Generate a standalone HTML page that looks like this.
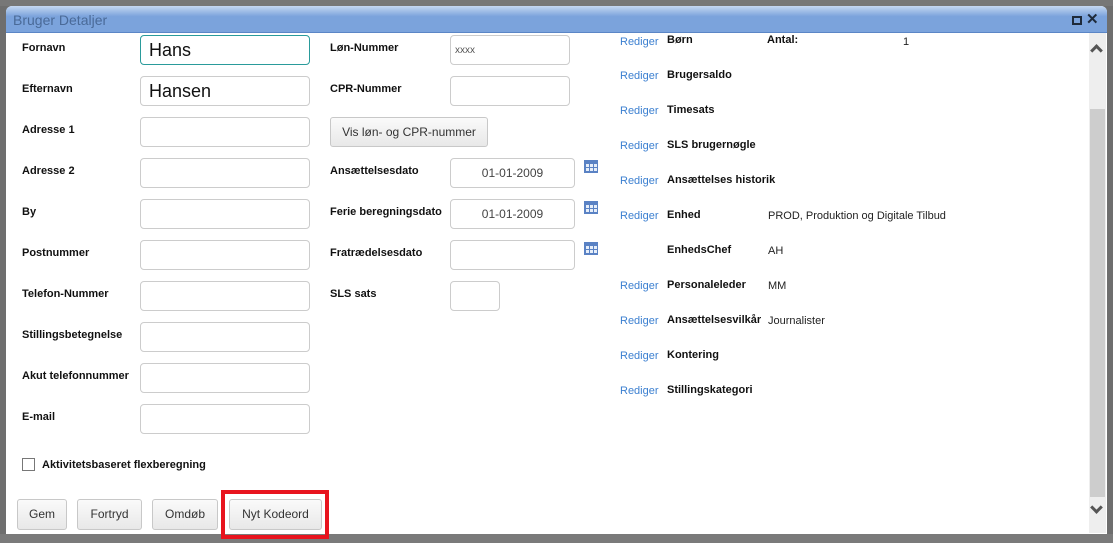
<!DOCTYPE html>
<html><head><meta charset="utf-8"><style>
*{box-sizing:border-box;margin:0;padding:0}
body{width:1113px;height:543px;background:#6e6e6e;font-family:"Liberation Sans",sans-serif;position:relative;overflow:hidden}
.a{position:absolute}
.dlg{left:6px;top:6px;width:1101px;height:528px;background:#fff;border-radius:6px 6px 0 0;overflow:hidden}
.tb{left:0;top:0;width:1101px;height:27px;background:linear-gradient(#c5d8f2,#7ba3dc 40%);border-bottom:1px solid #5b86c6;color:#4a6a98;font-size:14px;padding:6px 0 0 7px}
.l{font-size:11px;font-weight:bold;color:#111}
.i{border:1px solid #ccc;border-radius:4px;height:30px;background:#fff}
.r{font-size:11px;color:#3b7fd0}
.v{font-size:11px;color:#222}
.b{border:1px solid #c8c8c8;border-radius:3px;background:linear-gradient(#fafafa,#e8e8e8);font-size:12px;color:#333;text-align:center;line-height:29px;height:31px}
.cal{width:14px;height:13px;border:1px solid #5a82c4;background:repeating-linear-gradient(90deg,#5a82c4 0 1px,transparent 1px 4px),repeating-linear-gradient(#5a82c4 0 1px,#e6eef9 1px 4px);border-top:3px solid #5a82c4}
.d{font-size:12px;color:#444;text-align:center;line-height:28px}
</style></head><body>
<div class="a" style="left:0;top:0;width:1113px;height:6px;background:#777"></div>
<div class="a dlg">
<div class="a tb">Bruger Detaljer</div>
<div class="a" style="left:1066px;top:10px;width:10px;height:9px;border:2px solid #1e2a3a"></div>
<div class="a" style="left:1080px;top:4px;font-size:15px;font-weight:bold;color:#1e2a3a">✕</div>
</div>
<!-- left column -->
<div class="a l" style="left:22px;top:42px">Fornavn</div>
<div class="a l" style="left:22px;top:83px">Efternavn</div>
<div class="a l" style="left:22px;top:124px">Adresse 1</div>
<div class="a l" style="left:22px;top:165px">Adresse 2</div>
<div class="a l" style="left:22px;top:206px">By</div>
<div class="a l" style="left:22px;top:247px">Postnummer</div>
<div class="a l" style="left:22px;top:288px">Telefon-Nummer</div>
<div class="a l" style="left:22px;top:329px">Stillingsbetegnelse</div>
<div class="a l" style="left:22px;top:370px">Akut telefonnummer</div>
<div class="a l" style="left:22px;top:411px">E-mail</div>
<div class="a i" style="left:140px;top:35px;width:170px;border-color:#2a9b9b;font-size:18px;padding:4px 8px;color:#111">Hans</div>
<div class="a i" style="left:140px;top:76px;width:170px;font-size:18px;padding:4px 8px;color:#111">Hansen</div>
<div class="a i" style="left:140px;top:117px;width:170px"></div>
<div class="a i" style="left:140px;top:158px;width:170px"></div>
<div class="a i" style="left:140px;top:199px;width:170px"></div>
<div class="a i" style="left:140px;top:240px;width:170px"></div>
<div class="a i" style="left:140px;top:281px;width:170px"></div>
<div class="a i" style="left:140px;top:322px;width:170px"></div>
<div class="a i" style="left:140px;top:363px;width:170px"></div>
<div class="a i" style="left:140px;top:404px;width:170px"></div>
<!-- middle -->
<div class="a l" style="left:330px;top:42px">Løn-Nummer</div>
<div class="a l" style="left:330px;top:83px">CPR-Nummer</div>
<div class="a l" style="left:330px;top:165px">Ansættelsesdato</div>
<div class="a l" style="left:330px;top:206px">Ferie beregningsdato</div>
<div class="a l" style="left:330px;top:247px">Fratrædelsesdato</div>
<div class="a l" style="left:330px;top:288px">SLS sats</div>
<div class="a i" style="left:450px;top:35px;width:120px;font-size:10px;color:#555;padding:9px 4px">xxxx</div>
<div class="a i" style="left:450px;top:76px;width:120px"></div>
<div class="a b" style="left:330px;top:117px;width:158px;height:30px;line-height:28px">Vis løn- og CPR-nummer</div>
<div class="a i d" style="left:450px;top:158px;width:125px">01-01-2009</div>
<div class="a i d" style="left:450px;top:199px;width:125px">01-01-2009</div>
<div class="a i" style="left:450px;top:240px;width:125px"></div>
<div class="a i" style="left:450px;top:281px;width:50px"></div>
<div class="a cal" style="left:584px;top:160px"></div>
<div class="a cal" style="left:584px;top:201px"></div>
<div class="a cal" style="left:584px;top:242px"></div>
<!-- right -->
<div class="a r" style="left:620px;top:36px">Rediger</div><div class="a l" style="left:667px;top:34px">Børn</div><div class="a l" style="left:767px;top:34px">Antal:</div><div class="a v" style="left:903px;top:36px">1</div>
<div class="a r" style="left:620px;top:70px">Rediger</div><div class="a l" style="left:667px;top:69px">Brugersaldo</div>
<div class="a r" style="left:620px;top:105px">Rediger</div><div class="a l" style="left:667px;top:104px">Timesats</div>
<div class="a r" style="left:620px;top:140px">Rediger</div><div class="a l" style="left:667px;top:139px">SLS brugernøgle</div>
<div class="a r" style="left:620px;top:175px">Rediger</div><div class="a l" style="left:667px;top:174px">Ansættelses historik</div>
<div class="a r" style="left:620px;top:210px">Rediger</div><div class="a l" style="left:667px;top:209px">Enhed</div><div class="a v" style="left:768px;top:210px">PROD, Produktion og Digitale Tilbud</div>
<div class="a l" style="left:667px;top:244px">EnhedsChef</div><div class="a v" style="left:768px;top:245px">AH</div>
<div class="a r" style="left:620px;top:280px">Rediger</div><div class="a l" style="left:667px;top:279px">Personaleleder</div><div class="a v" style="left:768px;top:280px">MM</div>
<div class="a r" style="left:620px;top:315px">Rediger</div><div class="a l" style="left:667px;top:314px">Ansættelsesvilkår</div><div class="a v" style="left:768px;top:315px">Journalister</div>
<div class="a r" style="left:620px;top:350px">Rediger</div><div class="a l" style="left:667px;top:349px">Kontering</div>
<div class="a r" style="left:620px;top:385px">Rediger</div><div class="a l" style="left:667px;top:384px">Stillingskategori</div>
<!-- checkbox -->
<div class="a" style="left:22px;top:458px;width:13px;height:13px;border:1px solid #777;background:#fff"></div>
<div class="a l" style="left:42px;top:459px">Aktivitetsbaseret flexberegning</div>
<!-- buttons -->
<div class="a b" style="left:17px;top:499px;width:50px">Gem</div>
<div class="a b" style="left:77px;top:499px;width:65px">Fortryd</div>
<div class="a b" style="left:152px;top:499px;width:66px">Omdøb</div>
<div class="a b" style="left:229px;top:499px;width:93px">Nyt Kodeord</div>
<!-- scrollbar -->
<div class="a" style="left:1089px;top:33px;width:17px;height:500px;background:#eee"></div>
<div class="a" style="left:1090px;top:109px;width:15px;height:388px;background:#cdcdcd"></div>
<div class="a" style="left:1092px;top:46px;width:9px;height:9px;border-left:3px solid #555;border-top:3px solid #555;transform:rotate(45deg)"></div>
<div class="a" style="left:1092px;top:503px;width:9px;height:9px;border-right:3px solid #555;border-bottom:3px solid #555;transform:rotate(45deg)"></div>
<div class="a" style="left:0;top:534px;width:1113px;height:9px;background:#7a7a7a"></div>
<div class="a" style="left:221px;top:490px;width:108px;height:49px;border:4px solid #e8141e"></div>
</body></html>
